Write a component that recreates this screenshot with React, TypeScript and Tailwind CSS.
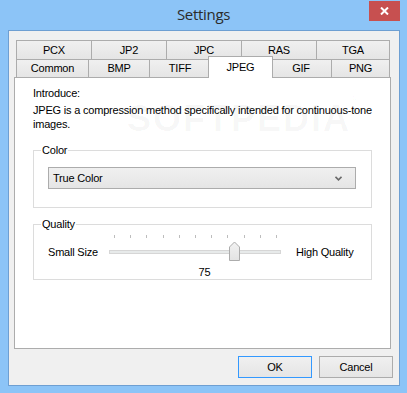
import React from "react";

const row1 = [
  { label: "PCX", w: "w-[76px]" },
  { label: "JP2", w: "w-[76px]" },
  { label: "JPC", w: "w-[76px]" },
  { label: "RAS", w: "w-[76px]" },
  { label: "TGA", w: "w-[74px]" },
];

const tabBase =
  "-ml-px first:ml-0 flex items-center justify-center border-t border-l border-r border-[#ACACAC] bg-gradient-to-b from-[#F0F0F0] to-[#E5E5E5] text-black";

function Slider() {
  const ticks = Array.from({ length: 11 }, (_, i) => 9 + i * 16.2);
  return (
    <svg width="180" height="27" viewBox="0 0 180 27" className="block shrink-0">
      <defs>
        <linearGradient id="thumbg" x1="0" y1="0" x2="0" y2="1">
          <stop offset="0" stopColor="#F2F2F2" />
          <stop offset="1" stopColor="#E3E3E3" />
        </linearGradient>
      </defs>
      {ticks.map((x, i) => (
        <line key={i} x1={Math.round(x) + 0.5} y1={0} x2={Math.round(x) + 0.5} y2={3} stroke="#BDBDBD" strokeWidth="1" />
      ))}
      <rect x="4.5" y="15.5" width="171" height="3" fill="#E7EAEA" stroke="#D6D6D6" />
      <path d="M124.5 25.5 V12 L129.5 7 L134.5 12 V25.5 Z" fill="url(#thumbg)" stroke="#ACACAC" />
    </svg>
  );
}

export default function App() {
  return (
    <div
      className="w-[407px] h-[393px] bg-[#8CC4F7] flex flex-col text-[11px] tracking-[-0.2px] text-black"
      style={{ fontFamily: '"Liberation Sans", Arial, sans-serif' }}
    >
      {/* Title bar */}
      <div className="relative h-[30px] shrink-0 flex items-center justify-center">
        <span
          className="text-[15px] tracking-[-0.3px] text-[#2B2B2B] pb-[1px]"
          style={{ fontFamily: '"Open Sans", "Noto Sans", sans-serif' }}
        >
          Settings
        </span>
        <div className="absolute left-[369px] top-[1px] w-[31px] h-[20px] bg-[#C75050] flex items-center justify-center">
          <svg width="9" height="8" viewBox="0 0 9 8">
            <path d="M1 0.5 L8 7.5 M8 0.5 L1 7.5" stroke="#FFFFFF" strokeWidth="2" />
          </svg>
        </div>
      </div>

      {/* Client area */}
      <div className="ml-[8px] w-[392px] h-[356px] border border-[#6E9FD2] bg-[#F0F0F0] flex flex-col">
        {/* Tab control */}
        <div className="ml-[5px] mt-[9px] w-[377px] flex flex-col">
          <div className="flex h-[19px] pl-[2px]">
            {row1.map((t) => (
              <div key={t.label} className={`${tabBase} ${t.w} h-[19px]`}>
                {t.label}
              </div>
            ))}
          </div>
          <div className="flex items-start h-[18px] pl-[2px]">
            <div className={`${tabBase} w-[73px] h-[18px]`}>Common</div>
            <div className={`${tabBase} w-[62px] h-[18px]`}>BMP</div>
            <div className={`${tabBase} w-[62px] h-[18px]`}>TIFF</div>
            <div className="relative z-10 -ml-[3px] -mr-[2px] -mt-[3px] w-[65px] h-[22px] border-t border-l border-r border-[#ACACAC] bg-white flex items-start justify-center pt-[2px]">
              JPEG
            </div>
            <div className={`${tabBase} w-[62px] h-[18px]`}>GIF</div>
            <div className={`${tabBase} w-[59px] h-[18px]`}>PNG</div>
          </div>

          {/* Panel */}
          <div className="relative h-[272px] border border-[#ACACAC] bg-white flex flex-col pl-[18px] pt-[8px]">
            <div
              aria-hidden="true"
              className="absolute left-[112px] top-[14px] text-[36px] font-bold tracking-[2px] text-[#000000]/[0.035] select-none pointer-events-none"
              style={{ fontFamily: '"Liberation Sans", Arial, sans-serif' }}
            >
              SOFTPEDIA<span className="text-[10px] align-top">®</span>
            </div>
            <div className="relative leading-[14px]">Introduce:</div>
            <div className="relative mt-[3px] leading-[14px] w-[355px]">
              JPEG is a compression method specifically intended for continuous-tone images.
            </div>

            {/* Color group */}
            <fieldset className="relative mt-[12px] w-[339px] border border-[#DCDCDC] pl-[14px] pb-[18px]">
              <legend className="-ml-[7px] px-px leading-[14px]">Color</legend>
              <div className="mt-[10px] w-[308px] h-[22px] border border-[#ACACAC] bg-gradient-to-b from-[#F0F0F0] to-[#E5E5E5] flex items-center justify-between pl-[4px] pr-[13px]">
                <span>True Color</span>
                <svg width="7" height="5" viewBox="0 0 7 5">
                  <path d="M0.5 0.8 L3.5 3.8 L6.5 0.8" fill="none" stroke="#6A6A6A" strokeWidth="1.6" />
                </svg>
              </div>
            </fieldset>

            {/* Quality group */}
            <fieldset className="relative mt-[9px] w-[339px] border border-[#DCDCDC] pl-[14px]">
              <legend className="-ml-[7px] px-px leading-[14px]">Quality</legend>
              <div className="mt-[4px] flex items-start">
                <div className="w-[57px] mt-[10px] leading-[14px] whitespace-nowrap">Small Size</div>
                <Slider />
                <div className="ml-[11px] mt-[10px] leading-[14px] whitespace-nowrap">High Quality</div>
              </div>
              <div className="mt-[3px] leading-[14px] text-center pr-[10px] pl-[0px]">75</div>
            </fieldset>
          </div>
        </div>

        {/* Buttons */}
        <div className="mt-[7px] flex justify-end gap-[7px] pr-[6px]">
          <button className="w-[74px] h-[22px] border border-[#3399FF] bg-gradient-to-b from-[#F0F0F0] to-[#E5E5E5] flex items-center justify-center">
            OK
          </button>
          <button className="w-[74px] h-[22px] border border-[#ACACAC] bg-gradient-to-b from-[#F0F0F0] to-[#E5E5E5] flex items-center justify-center">
            Cancel
          </button>
        </div>
      </div>
    </div>
  );
}
